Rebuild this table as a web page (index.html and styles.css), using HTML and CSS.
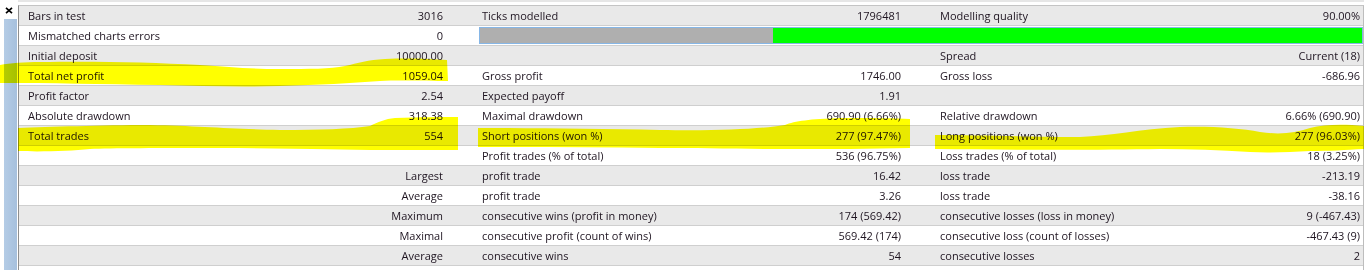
FILE: index.html
```html
<!DOCTYPE html>
<html>
<head>
<meta charset="utf-8">
<link rel="stylesheet" href="styles.css">
</head>
<body>
<div class="panel">
  <div class="side">
    <div class="close">
      <svg width="8" height="7" viewBox="0 0 8 7"><path d="M1 0.8 L7 6.2 M7 0.8 L1 6.2" stroke="#000" stroke-width="1.7" fill="none"/></svg>
    </div>
    <div class="tabbar"></div>
  </div>
  <div class="main">
    <div class="report">
      <div class="row">
        <div class="lab">Bars in test</div><div class="val">3016</div><div></div>
        <div class="lab2">Ticks modelled</div><div class="val">1796481</div><div></div>
        <div class="lab2">Modelling quality</div><div class="val">90.00%</div>
      </div>
      <div class="row">
        <div class="lab">Mismatched charts errors</div><div class="val">0</div><div></div>
        <div class="bar"><div class="bar-gray" style="width:33.2%"></div><div class="bar-green"></div></div>
      </div>
      <div class="row">
        <div class="lab">Initial deposit</div><div class="val">10000.00</div><div></div>
        <div class="lab2"></div><div class="val"></div><div></div>
        <div class="lab2">Spread</div><div class="val">Current (18)</div>
      </div>
      <div class="row">
        <div class="lab">Total net profit</div><div class="val">1059.04</div><div></div>
        <div class="lab2">Gross profit</div><div class="val">1746.00</div><div></div>
        <div class="lab2">Gross loss</div><div class="val">-686.96</div>
      </div>
      <div class="row">
        <div class="lab">Profit factor</div><div class="val">2.54</div><div></div>
        <div class="lab2">Expected payoff</div><div class="val">1.91</div><div></div>
        <div class="lab2"></div><div class="val"></div>
      </div>
      <div class="row">
        <div class="lab">Absolute drawdown</div><div class="val">318.38</div><div></div>
        <div class="lab2">Maximal drawdown</div><div class="val">690.90 (6.66%)</div><div></div>
        <div class="lab2">Relative drawdown</div><div class="val">6.66% (690.90)</div>
      </div>
      <div class="row">
        <div class="lab">Total trades</div><div class="val">554</div><div></div>
        <div class="lab2">Short positions (won %)</div><div class="val">277 (97.47%)</div><div></div>
        <div class="lab2">Long positions (won %)</div><div class="val">277 (96.03%)</div>
      </div>
      <div class="row">
        <div class="lab"></div><div class="val"></div><div></div>
        <div class="lab2">Profit trades (% of total)</div><div class="val">536 (96.75%)</div><div></div>
        <div class="lab2">Loss trades (% of total)</div><div class="val">18 (3.25%)</div>
      </div>
      <div class="row">
        <div class="lab"></div><div class="val">Largest</div><div></div>
        <div class="lab2">profit trade</div><div class="val">16.42</div><div></div>
        <div class="lab2">loss trade</div><div class="val">-213.19</div>
      </div>
      <div class="row">
        <div class="lab"></div><div class="val">Average</div><div></div>
        <div class="lab2">profit trade</div><div class="val">3.26</div><div></div>
        <div class="lab2">loss trade</div><div class="val">-38.16</div>
      </div>
      <div class="row">
        <div class="lab"></div><div class="val">Maximum</div><div></div>
        <div class="lab2">consecutive wins (profit in money)</div><div class="val">174 (569.42)</div><div></div>
        <div class="lab2">consecutive losses (loss in money)</div><div class="val">9 (-467.43)</div>
      </div>
      <div class="row">
        <div class="lab"></div><div class="val">Maximal</div><div></div>
        <div class="lab2">consecutive profit (count of wins)</div><div class="val">569.42 (174)</div><div></div>
        <div class="lab2">consecutive loss (count of losses)</div><div class="val">-467.43 (9)</div>
      </div>
      <div class="row">
        <div class="lab"></div><div class="val">Average</div><div></div>
        <div class="lab2">consecutive wins</div><div class="val">54</div><div></div>
        <div class="lab2">consecutive losses</div><div class="val">2</div>
      </div>
    </div>
  </div>
  <svg class="marker" width="1369" height="270" viewBox="0 0 1369 270">
    <path d="M0,65 C10,63 25,62 40,62 C90,61 150,62 200,65 C230,67 250,69 280,69 C310,69 330,69 345,66 C358,63 368,60 385,59 C410,58 430,59 447,60 L448,81 C430,81 400,80 380,81 C350,83 320,85 280,86 C240,87 200,86 160,85 C100,84 50,83 0,83 Z"/>
    <path d="M18,128 C50,127 100,125 150,125 C200,126 230,129 280,130 C320,130 350,129 370,126 C378,122 385,119 395,118 C420,117 440,117 458,117 L458,150 C420,150 390,150 370,150 C320,149 270,148 220,148 C160,148 110,148 90,149 C70,151 40,152 18,151 Z"/>
    <path d="M478,128 C530,128 600,129 660,130 C720,131 760,129 785,125 C795,121 810,119 840,118 C870,118 895,118 910,119 L910,148 C870,149 830,149 790,149 C740,149 700,148 660,148 C600,147 540,147 478,147 Z"/>
    <path d="M935,135 C980,135 1040,137 1080,137 C1110,136 1140,129 1180,127 C1210,126 1240,128 1260,132 C1280,135 1295,133 1310,128 C1325,124 1345,124 1364,126 L1364,149 C1345,150 1330,151 1310,151 C1290,152 1270,153 1250,152 C1220,150 1190,149 1160,149 C1100,150 1020,150 935,149 Z"/>
  </svg>
</div>
</body>
</html>
```

FILE: styles.css
```css
html, body {
  margin: 0;
  padding: 0;
  background: #ffffff;
}

body {
  font-family: "Open Sans", "DejaVu Sans", sans-serif;
  font-size: 11px;
  color: #1e1420;
}

.panel {
  position: relative;
  display: flex;
  width: 1369px;
  height: 270px;
  overflow: hidden;
}

.side {
  width: 18px;
  display: flex;
  flex-direction: column;
  flex: none;
}

.close {
  height: 19px;
  padding: 7px 0 0 5px;
  box-sizing: border-box;
  line-height: 0;
}

.tabbar {
  flex: 1;
  width: 13px;
  margin-left: 4px;
  background: linear-gradient(to right, #b4cce6, #a6c0dd);
}

.main {
  width: 1346px;
  flex: none;
  border-top: 2px solid #e6e6e6;
  padding-top: 3px;
}

.report {
  border-top: 1px solid #c4c4c4;
  border-left: 1px solid #8e8e8e;
  border-right: 1px solid #bdbdbd;
  height: 300px;
}

.row {
  display: grid;
  grid-template-columns: 213px 214px 33px 213px 212px 33px 213px 213px;
  height: 19px;
  line-height: 19px;
  border-bottom: 1px solid #cfcfcf;
  background: #ffffff;
  white-space: nowrap;
}

.row:nth-child(odd) {
  background: #e9e9e9;
}

.lab {
  padding-left: 9px;
}

.lab2 {
  padding-left: 3px;
}

.val {
  text-align: right;
  padding-right: 3px;
}

.bar {
  grid-column: 4 / 9;
  display: flex;
  height: 15px;
  margin-top: 1px;
  border: 1px solid #86b6e6;
}

.bar-gray {
  background: #afafaf;
}

.bar-green {
  flex: 1;
  background: #00ff00;
}

.marker {
  position: absolute;
  left: 0;
  top: 0;
  pointer-events: none;
  mix-blend-mode: multiply;
  fill: #ffff00;
}
```
